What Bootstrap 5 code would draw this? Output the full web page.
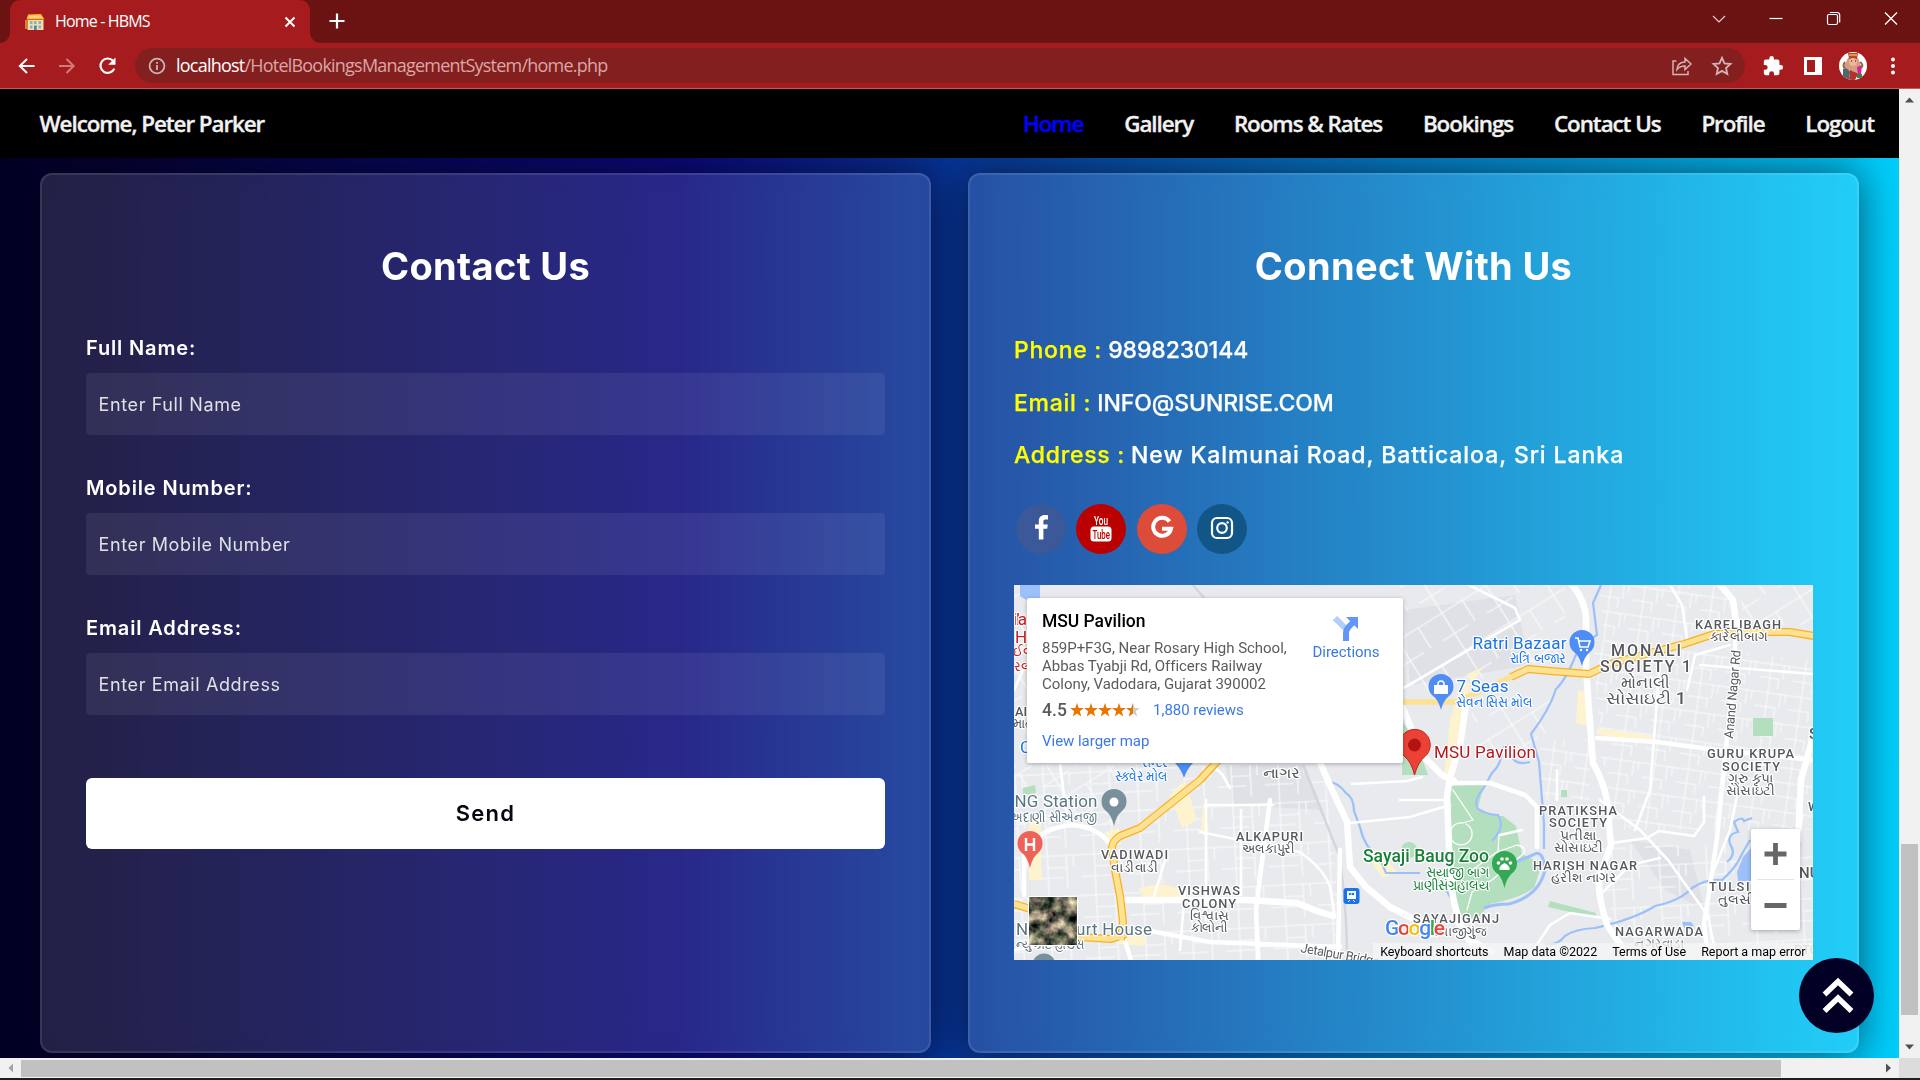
<!DOCTYPE html>
<html lang="en">
<head>
<meta charset="utf-8">
<meta name="viewport" content="width=device-width, initial-scale=1">
<title>Home - HBMS</title>
<link rel="stylesheet" href="https://cdn.jsdelivr.net/npm/bootstrap@5.3.0/dist/css/bootstrap.min.css">
<script src="https://cdn.jsdelivr.net/npm/bootstrap@5.3.0/dist/js/bootstrap.bundle.min.js"></script>
<style>
body{width:1920px;height:1080px;overflow:hidden;font-family:Inter,sans-serif;background:#1f1f1f}
svg{display:block;flex:none}
/* browser frame */
.tabstrip{height:43px;background:#6b1213;font-family:"Open Sans",sans-serif}
.apptab{width:300px;margin-left:10px;background:#a61c1e;border-radius:10px 10px 0 0;padding:0 14px 0 15px;position:relative}
.apptab::before,.apptab::after{content:"";position:absolute;bottom:0;width:10px;height:10px}
.apptab::before{left:-10px;background:radial-gradient(circle at 0 0,transparent 9.5px,#a61c1e 10px)}
.apptab::after{right:-10px;background:radial-gradient(circle at 100% 0,transparent 9.5px,#a61c1e 10px)}
.apptab-title{font-size:16px;letter-spacing:-.85px;color:#fff;margin:-2px 0 0 10px;line-height:40px}
.newtab{margin:13px 0 0 19px}
.winbtns{padding:10px 20px 0 0;gap:39.3px}
.toolbar{height:46px;background:#a61c1e;border-bottom:1px solid #c35a5b;font-family:"Open Sans",sans-serif}
.urlbar{width:1610px;height:35px;margin-left:17px;border-radius:18px;background:#841f20;padding:0 12px 0 13px}
.urltext{font-size:18px;letter-spacing:-.78px;color:#dba6a6;margin-left:10px;line-height:35px}
.urltext b{color:#fff;font-weight:400}
/* page */
.viewport-row{height:969px}
.pageview{width:1899px;background:linear-gradient(90deg,#020024 0%,#090979 36.1%,#00d4ff 102%);position:relative;overflow:hidden}
.topnav{height:69px;background:#000;padding:0 25px 0 39.5px;font:600 22.4px/70px "Open Sans",sans-serif;letter-spacing:-1.06px;color:#f2f2f2;-webkit-text-stroke:.35px}
.topnav a{color:#f2f2f2;text-decoration:none}
.topnav a.current{color:#00f}
.links{gap:40.8px}
.panels{padding:15px 40px 5px;gap:37px}
.glass{width:891px;height:880px;border:2px solid rgba(255,255,255,.1);border-radius:12px;background:rgba(255,255,255,.13);backdrop-filter:blur(10px);box-shadow:0 0 40px rgba(8,7,16,.6);padding:61px 44px 0;color:#fff}
.glass h2{font-size:38px;font-weight:700;line-height:60px;letter-spacing:.35px;margin:0;text-align:center}
.flabel{font-size:20px;font-weight:600;line-height:30px;letter-spacing:.85px;display:block;margin:0 0 10px}
.field{height:62px;border:0;border-radius:4px;background:rgba(255,255,255,.07);padding:1px 12.5px 0;font-size:18px;letter-spacing:.62px;color:#fff}
.field:focus{background:rgba(255,255,255,.07)}
.field::placeholder{color:#e1e1e5;opacity:1}
.group{margin-bottom:38px}
.sendbtn{height:71px;background:#fff;color:#080710;border-radius:6px;font-size:22px;font-weight:600;letter-spacing:1.3px;margin-top:63px}
.info{font-size:23px;font-weight:500;line-height:52.5px;white-space:nowrap;-webkit-text-stroke:.25px}
.info span{color:#ff0;letter-spacing:.72px}
.num{letter-spacing:-.1px}.addr{letter-spacing:.94px}
.socials{padding-left:2px;margin-top:22.2px;gap:10.3px}
.soc{width:50px;height:50px;border-radius:50%}
.fb{background:#3b5998}.yt{background:#b00}.gg{background:#dd4b39}.ig{background:#125688}
.mapbox{width:799px;height:375px;margin-top:31px;position:relative;overflow:hidden;font-family:Roboto,sans-serif}
.place{left:13px;top:13px;width:376px;height:165px;background:#fff;border-radius:2px;box-shadow:0 1px 4px rgba(0,0,0,.3);padding:13px 15px;color:#5b5b5b;font-size:15px;line-height:18px;letter-spacing:-.03px}
.place h3{font-size:17.5px;font-weight:500;line-height:20px;color:#000;margin:0 0 8px}
.place .maplink{color:#3b78e7;text-decoration:none}
.dirs{width:84px}
.rating{font-size:17.5px;font-weight:500;letter-spacing:.1px}
.zoomer{left:737px;top:244px;width:49px;height:101px;background:#fff;border-radius:2px;box-shadow:0 1px 4px rgba(0,0,0,.3)}
.legal{right:0;bottom:0;height:17px;font-size:12.5px;line-height:17px;color:#000}
.legal span{background:rgba(245,245,245,.75);padding:0 7.5px}
.gotop{left:1799px;top:869px;width:75px;height:75px;border-radius:50%;background:#020024}
.vbar{width:21px;background:#f1f1f1;padding:0 2px}
.vthumb{height:171px;margin-top:741px;background:#c1c1c1}
.hbar{height:20px;background:#f1f1f1}
.hthumb{width:1760px;height:17px;background:#c1c1c1}
/* map lettering */
.mt{font-family:Roboto,sans-serif;paint-order:stroke;stroke:#fff;stroke-width:2.5px;stroke-linejoin:round}
.area{fill:#55585c;font-weight:500}
</style>
</head>
<body>
<header>
  <div class="tabstrip d-flex">
    <div class="apptab d-flex align-items-center">
      <svg width="20" height="20" viewBox="0 0 20 20"><path d="M2.500 8h16v10h-16z" fill="#f6dfa2"/><path d="M3 2.500 16 2l3.500 5.500H1.500z" fill="#fcb73c"/><path d="M5 3.500h10.500l1.500 2.500H3.500z" fill="#ffd36a"/><path d="M5 9h2.500v3H5zM9 9h2.500v3H9zM13.500 9H16v3h-2.500zM5 13.500h2.500v3H5zM13.500 13.500H16v3h-2.500z" fill="#7fb2c9"/><path d="M9 13.500h2.800V18H9z" fill="#4c86c6"/><path d="M1 8v9" stroke="#fcb73c" stroke-width="1.300"/></svg>
      <span class="apptab-title">Home - HBMS</span>
      <svg class="ms-auto" width="12" height="12" viewBox="0 0 12 12"><path d="m1.500 1.500 9 9m0-9-9 9" stroke="#fff" stroke-width="2"/></svg>
    </div>
    <svg class="newtab" width="16" height="16" viewBox="0 0 16 16"><path d="M8 .5v15M.5 8h15" stroke="#fff" stroke-width="2.200"/></svg>
    <div class="winbtns d-flex ms-auto">
      <svg width="18" height="18" viewBox="0 0 18 18"><path d="m3 6 6 6 6-6" fill="none" stroke="#e5d0d0" stroke-width="1.200"/></svg>
      <svg width="18" height="18" viewBox="0 0 18 18"><path d="M2.500 8.500h13" stroke="#fff" stroke-width="1.200"/></svg>
      <svg width="18" height="18" viewBox="0 0 18 18"><rect x="2.500" y="4.500" width="10" height="10" rx="1.500" fill="none" stroke="#fff" stroke-width="1.200"/><path d="M4.800 2.500h7.400a2.500 2.500 0 0 1 2.500 2.500v7.500" fill="none" stroke="#fff" stroke-width="1.200"/></svg>
      <svg width="18" height="18" viewBox="0 0 18 18"><path d="m3 2.500 12 12m0-12-12 12" stroke="#fff" stroke-width="1.300"/></svg>
    </div>
  </div>
  <div class="toolbar d-flex align-items-center">
    <svg style="margin-left:17px" width="20" height="20" viewBox="0 0 20 20"><path d="M17.500 10H3m7-7-7.200 7 7.200 7" fill="none" stroke="#fff" stroke-width="2"/></svg>
    <svg style="margin-left:20px" width="20" height="20" viewBox="0 0 20 20"><path d="M2 10h14.500m-7-7 7.200 7-7.200 7" fill="none" stroke="#d07a7b" stroke-width="2"/></svg>
    <svg style="margin-left:21px" width="20" height="20" viewBox="0 0 20 20"><path d="M16.300 12.600A7.200 7.200 0 1 1 15 4.800" fill="none" stroke="#fff" stroke-width="2.200"/><path d="M17.500 1.500v7.300h-7.300z" fill="#fff"/></svg>
    <div class="urlbar d-flex align-items-center">
      <svg width="18" height="18" viewBox="0 0 18 18" fill="none" stroke="#c9b5b6" stroke-width="1.800"><circle cx="9" cy="9" r="7.400"/><path d="M9 8v5M9 5v1.800"/></svg>
      <span class="urltext"><b>localhost</b>/HotelBookingsManagementSystem/home.php</span>
      <svg class="ms-auto" width="22" height="22" viewBox="0 0 22 22" fill="none" stroke="#d3b3b4" stroke-width="1.500"><path d="M5.500 6H2v13.500h15V16"/><path d="M6 14.500c.5-5 3.500-7.500 8-7.500V3.500l6 5.500-6 5.500V11c-3.500 0-6 1-8 3.500z"/></svg>
      <svg style="margin-left:18px" width="22" height="22" viewBox="0 0 22 22"><path d="m11 2.800 2.500 5.600 6 .6-4.500 4 1.300 6L11 15.900 5.700 19l1.300-6-4.500-4 6-.6z" fill="none" stroke="#d3b3b4" stroke-width="1.800"/></svg>
    </div>
    <svg style="margin-left:17px" width="22" height="22" viewBox="0 0 24 24"><path fill="#fff" d="M20.500 11H19V7a2 2 0 0 0-2-2h-4V3.500a2.500 2.500 0 0 0-5 0V5H4a2 2 0 0 0-2 2v3.800h1.500a2.700 2.700 0 0 1 0 5.400H2V20a2 2 0 0 0 2 2h3.800v-1.500a2.700 2.700 0 0 1 5.400 0V22H17a2 2 0 0 0 2-2v-4h1.500a2.500 2.500 0 0 0 0-5z"/></svg>
    <svg style="margin-left:20px" width="18" height="18" viewBox="0 0 18 18"><path fill="#fff" fill-rule="evenodd" d="M0 0h18v18H0zM3 3v12h8V3z"/></svg>
    <svg style="margin-left:17px" width="28" height="28" viewBox="0 0 28 28"><clipPath id="av"><circle cx="14" cy="14" r="14"/></clipPath><g clip-path="url(#av)"><path fill="#fff" d="M0 0h28v28H0z"/><path d="M9 6h10l3 8-2 8H8L5 14z" fill="#d99a84"/><path d="M9 1h10l-1 6H10z" fill="#b8472c"/><path d="M10 3h8" stroke="#e7b449" stroke-width="1.500"/><circle cx="14" cy="10" r="4" fill="#eab79b"/><path d="M12 9h1m3 0h1" stroke="#933" stroke-width="1.500"/><path d="M4 17c3-2 5 0 7 3l-1 7H4z" fill="#4d6a68"/><path d="m18 15 5-2-1 9-3 1z" fill="#d81fa0"/><path d="M11 18c3 2 6 2 8 4l-3 6h-6z" fill="#b3302c"/><path d="M6 10c-2 2-2 5 0 6m15-6c3 2 3 4 1 6" stroke="#8c6c3f" stroke-width="2" fill="none"/><path d="M18 22h5v4h-5z" fill="#3f7a4c"/></g></svg>
    <svg style="margin-left:22.500px" width="6" height="18" viewBox="0 0 6 18" fill="#fff"><circle cx="3" cy="2.500" r="2"/><circle cx="3" cy="9" r="2"/><circle cx="3" cy="15.500" r="2"/></svg>
  </div>
</header>

<div class="viewport-row d-flex">
  <main class="pageview">
    <nav class="topnav d-flex justify-content-between">
      <span>Welcome, Peter Parker</span>
      <div class="links d-flex"><a class="current">Home</a><a>Gallery</a><a>Rooms &amp; Rates</a><a>Bookings</a><a>Contact Us</a><a>Profile</a><a>Logout</a></div>
    </nav>
    <div class="panels d-flex">
      <section class="glass">
        <h2>Contact Us</h2>
        <form style="margin-top:37px">
          <div class="group"><label class="flabel">Full Name:</label><input class="form-control field" placeholder="Enter Full Name"></div>
          <div class="group"><label class="flabel">Mobile Number:</label><input class="form-control field" placeholder="Enter Mobile Number"></div>
          <div><label class="flabel">Email Address:</label><input class="form-control field" placeholder="Enter Email Address"></div>
          <button type="button" class="btn sendbtn w-100">Send</button>
        </form>
      </section>
      <section class="glass">
        <h2>Connect With Us</h2>
        <div style="margin-top:28.300px">
          <div class="info"><span>Phone :</span> <i class="num fst-normal">9898230144</i></div>
          <div class="info"><span>Email :</span> <i class="num fst-normal">INFO@SUNRISE.COM</i></div>
          <div class="info"><span>Address :</span> <i class="addr fst-normal">New Kalmunai Road, Batticaloa, Sri Lanka</i></div>
        </div>
        <div class="socials d-flex">
          <a class="soc fb"><svg width="50" height="50" viewBox="0 0 50 50"><path fill="#fff" d="M32 11.300v4.200h-2.600c-1.700 0-2 .8-2 2v3h4.400l-.6 4.200h-3.800V35.500h-4.600V24.700H19v-4.200h3.800v-3.200c0-4 2.400-6.200 6-6.200 1.600 0 2.700.1 3.200.2z"/></svg></a>
          <a class="soc yt"><svg width="50" height="50" viewBox="0 0 50 50"><rect x="14.500" y="22.500" width="21" height="15" rx="3.500" fill="#fff"/><g font-family="Roboto,sans-serif" font-weight="500"><text x="18" y="21" font-size="13" fill="#fff" textLength="14" lengthAdjust="spacingAndGlyphs">You</text><text x="16.500" y="34.500" font-size="12" fill="#b00" textLength="17.500" lengthAdjust="spacingAndGlyphs">Tube</text></g></svg></a>
          <a class="soc gg"><svg width="50" height="50" viewBox="0 0 50 50"><path d="M32.500 17.500A9 9 0 1 0 34 24.700H25" fill="none" stroke="#fff" stroke-width="4"/></svg></a>
          <a class="soc ig"><svg width="50" height="50" viewBox="0 0 50 50" fill="none" stroke="#fff" stroke-width="2.200"><rect x="15" y="14" width="20" height="20" rx="5"/><circle cx="25" cy="24" r="4.800"/><circle cx="30.600" cy="18.400" r="1.200" fill="#fff" stroke="none"/></svg></a>
        </div>
        <div class="mapbox">
          <svg width="799" height="375" viewBox="1014 585 799 375">
            <defs>
              <pattern id="g1" width="34" height="29" patternUnits="userSpaceOnUse" patternTransform="rotate(8)"><path d="M0 5h34M0 19h20M11 0v29M24 5v14M20 19v10M29 5v8" fill="none" stroke="#fafbfc" stroke-width="1"/></pattern>
              <pattern id="g2" width="47" height="41" patternUnits="userSpaceOnUse" patternTransform="rotate(-3)"><path d="M0 8h47M0 30h29M14 0v41M33 8v33M14 20h19M40 8v12" fill="none" stroke="#fafbfc" stroke-width="1.100"/></pattern>
              <pattern id="g3" width="52" height="44" patternUnits="userSpaceOnUse" patternTransform="rotate(-32)"><path d="M0 8h52M0 32h30M14 0v44M38 8v24" fill="none" stroke="#fafbfc" stroke-width="1.200"/></pattern>
              <filter id="sat" x="0" y="0" width="1" height="1" color-interpolation-filters="sRGB"><feTurbulence type="fractalNoise" baseFrequency=".09" numOctaves="5" seed="8"/><feColorMatrix values="1.5 .3 0 0 -.47  1.3 .1 .1 0 -.33  1.1 .2 0 0 -.30  0 0 0 0 1"/></filter>
            </defs>
            <path fill="#e8eaed" d="M1014 585h799v375h-799z"/>
            <path fill="#dfe1e6" d="M1225 765h80l18 45-90-5zM1405 610l110-15 15 70-120 20zM1630 840l60 10 15 60-40-20z"/>
            <path fill="url(#g2)" d="M1014 765h310l20 195h-330zM1595 845h218v115h-190z"/>
            <path fill="url(#g1)" d="M1592 640l220 20v170h-190zM1600 585h130v50l-125 25zM1595 670h140v150h-130zM1540 740h50v60h-50z"/>
            <path fill="url(#g3)" d="M1400 585h165v70l-160 45zM1740 585h73v40h-70zM1470 700h80v40l-70 30zM1014 765h100v60h-100zM1014 585h13v200h-13z"/>
            <g fill="#fef3cf"><path d="M1170 795l15-15 12 40-15 8zM1203 800l6 30-8 2zM1105 832l14-4 2 16-10 4zM1139 888l20-4 30 6-6 10-40-2zM1029 820h12v60h-12zM1030 870h12v10h-12zM1450 720l12-40 8 4-10 50-4 40h-12zM1467 674l15-6-10 16zM1578 690l10 2 6 35-18-4zM1597 728l55 8v8l-55-10zM1368 858l15-4 14 18-14 6zM1115 930l30 6v10l-26-2z"/></g>
            <g fill="#b4dfbf"><path d="M1450 786l34-2-6 24q4 8 25 8l13 10 6 28 20 10-8 24q-14 10-44 16l-14 16-18-6-6-60z"/><path d="M1550 901l46 12v5l-48-11zM1753 718h20v18h-20zM1023 788l12-3 1 8-13 2zM1402 722l12 15 14 38h-26zM1561 790h6v7h-6zM1401 850a8 8 0 1 1 16 0 8 8 0 0 1-16 0z"/></g>
            <path fill="#9cc0f9" d="M1020 585h20v13q-10 6-20-2zM1737 872l6-15 9-10v34h-14zM1682 922h9l3 4-10 2z"/>
            <g fill="none" stroke="#9cc0f9" stroke-width="2.200"><path d="M1601 585l-8 18 4 32-18 12q-12 32-23 42-6 20-25 45l8 28 5 62v25M1530 762q-20 5-19-14-4-5-9 1 0 15-10 24l-9 16q-10 12-5 20 10 6 20 6 8 12-6 26"/><path stroke-width="3" d="M1484 908q10-4 25-4 30-8 36-34-2-22-12-15l-24 10"/><path d="M1545 944q12 2 20-8 10-7 30-8 40-9 60-22 25-5 37-18 13-9 30-8 14-12 20-26l8-14M1727 862q10-8 3-18-3-10 8-12l-4-10q8-6 10-1l8-3M1326 781q12 1 20 12 8 5 8 18l6 16q4 20 20 32l6 14h34M1440 880l12 20"/></g>
            <g fill="none" stroke="#d3d7dc" stroke-width="2.500"><path d="M1303 765l36 90q8 50 8 105M1193 585l17 20"/></g>
            <g fill="none" stroke="#fff" stroke-linecap="round" stroke-linejoin="round">
              <path stroke-width="6.500" d="M1568 580q17 18 18 38v50l5 70 2 25q16 28 16 60l2 22-11 30q-4 15 7 50l24 35M1466 705l-6 40-10 32-3 20 2 50 4 50 6 25 12 22M1319 760l14 32 14 30 3 45 16 20 24 20 30 15M1716 580l17 20 4 28M1402 706l11 27 12 25 17 17 12 6M1815 730l-14 50-3 60M1127 900h120l50 3 20 8 16 5"/>
              <path stroke-width="4.500" d="M1597 738l60 4 60 8 96 10M1736 628l-3 55-8 75-8 80-8 55-5 30 4 34M1258 960l-2-50 5-40 9-70M1024 895v-40q14-28 50-30 24 3 35 18l6 10M1150 931l60 11 130 5M1340 850l-2 110M1452 783h38l35 12 12 12v40M1123 935l8 25M1453 917l15 20 25 15"/>
              <path stroke-width="2.600" d="M1600 800l40 30 28 30 40 56 8 40M1660 660l-10 130-15 40M1612 843l35-5 12-7 35 5 10-14v-25M1600 895l30-30 30-7M1014 690l9-20M1350 823l60-6 40-12M1352 784l55-3 15-4M1205 805h68M1206 800v120M1241 810v85M1270 802l-12 80M1200 832l100 20q25 18 30 35l5 30M1230 788l-8-14-30-25M1060 765l8 60M1530 955l20-30 20-12 40 6M1400 800h48M1700 665l113 9M1687 690l8-35 35-10M1670 585l12 20 6 40M1557 770v30M1400 690l120-70-5-12-60-30M1015 950l60-10M1180 950l5-60M1165 860l-12 40M1500 835l22-5M1740 780l-10 50-20 50"/>
              <path stroke-width="1.300" d="M1453 790l20 30-10 3m0 0a11 11 0 1 0 3 1M1472 870l25-18 20-7q12 3 5 10l-30 25-20 12 -5 18M1497 870l2-35"/>
            </g>
            <g fill="none" stroke-linejoin="round"><g stroke="#f9b11e" stroke-width="8"><path d="M1223 755l-23 25-20 16-20 16-20 16-20 8q-9 6-8 14l3 20 5 26 3 26-2 18M1014 904l20 6 10 8 35 19 32 2 15-5"/><path d="M1511 677l17-8 22 2 39 3 21-10 40-11 34-9 30-10 46-2h30l24 4"/></g>
            <g stroke="#fde293" stroke-width="5.500"><path d="M1223 755l-23 25-20 16-20 16-20 16-20 8q-9 6-8 14l3 20 5 26 3 26-2 18M1014 904l20 6 10 8 35 19 32 2 15-5"/><path d="M1400 702h55l22-9 34-16 17-8 22 2 39 3 21-10 40-11 34-9 30-10 46-2h30l24 4"/></g></g>
            <!-- pins -->
            <g>
              <path d="M1582 666q-3-11-8-14a12.500 12.500 0 1 1 16 0q-6 5-8 14z" fill="#4d8df5"/><path d="M1575 638h3l2 9h8l2-6h-11" fill="none" stroke="#fff" stroke-width="1.600"/><circle cx="1581" cy="650" r="1.200" fill="#fff"/><circle cx="1587" cy="650" r="1.200" fill="#fff"/>
              <path d="M1441 710q-3-11-8-14a12.500 12.500 0 1 1 16 0q-6 5-8 14z" fill="#4d8df5"/><path d="M1434 685h14v9h-14z" fill="#fff"/><path d="M1438 687v-3a3 3 0 0 1 6 0v3" fill="none" stroke="#fff" stroke-width="1.500"/>
              <path d="M1184 778q-3-9-9-15h18q-6 6-9 15z" fill="#4d8df5"/>
              <path d="M1114 826q-3-12-8-15a12.500 12.500 0 1 1 16 0q-6 5-8 15z" fill="#78909c"/><circle cx="1114" cy="802" r="4.500" fill="#fff"/>
              <path d="M1030 868q-3-12-8-15a12.500 12.500 0 1 1 16 0q-6 5-8 15z" fill="#ef6258"/><path d="M1026 838v13m8-13v13m-8-6.500h8" stroke="#fff" stroke-width="2.400"/>
              <path d="M1504.500 888q-3-12-8-15a12.500 12.500 0 1 1 16 0q-6 5-8 15z" fill="#34a853"/><g fill="#fff"><path d="M1504.500 863q6 3 5 7h-10q-1-4 5-7z"/><circle cx="1498.500" cy="863" r="1.800"/><circle cx="1502" cy="859" r="1.800"/><circle cx="1507" cy="859" r="1.800"/><circle cx="1510.500" cy="863" r="1.800"/></g>
              <circle cx="1044" cy="965" r="11.500" fill="#78909c"/>
              <path d="M1414.500 775q-3-13-10-18.500a15.500 15.500 0 1 1 20.500 0q-7 5.500-10.500 18.500z" fill="#ea4335" stroke="#c5221f"/><circle cx="1414.500" cy="745" r="6.500" fill="#b31412"/>
              <rect x="1343.500" y="888" width="16" height="16" rx="3" fill="#1a73e8"/><path d="M1347 891h9v8h-9z" fill="#fff"/><path d="M1348.500 892.500h6v3h-6zM1351.200 892v4" fill="#1a73e8" stroke="#fff" stroke-width=".8"/><path d="M1348 902l2-2m5 2-2-2" stroke="#fff"/>
            </g>
            <g class="mt" font-size="17" fill="#1a73e8">
              <text x="1472.500" y="648.500" textLength="94">Ratri Bazaar</text><text x="1510" y="663" font-size="13.500" textLength="56" lengthAdjust="spacingAndGlyphs">રાત્રિ બજાર</text>
              <text x="1456.500" y="692" textLength="52">7 Seas</text><text x="1456" y="707" font-size="13.500" textLength="77" lengthAdjust="spacingAndGlyphs">સેવન સિસ મોલ</text>
              <text x="1142" y="767" font-size="13.500" textLength="26" lengthAdjust="spacingAndGlyphs">સેન્ટર</text><text x="1115" y="781" font-size="13.500" textLength="53" lengthAdjust="spacingAndGlyphs">સ્ક્વેર મોલ</text>
              <text x="1020" y="753">C</text>
              <text x="1434" y="758" fill="#b3171d" textLength="102">MSU Pavilion</text>
              <g fill="#c5221f"><text x="1014" y="625" textLength="13">ila</text><text x="1015" y="643">H</text><text x="1013" y="656" font-size="13">ઈલ</text><text x="1014" y="671" font-size="13">રલ</text></g>
              <g fill="#5b7583"><text x="1014.500" y="807" textLength="83">NG Station</text><text x="1010" y="822" font-size="13.500" textLength="87" lengthAdjust="spacingAndGlyphs">અદાણી સીએનજી</text><text x="1016" y="934.500" textLength="136">New Court House</text><text x="1016" y="949" font-size="13.500" textLength="68" lengthAdjust="spacingAndGlyphs">ન્યુ કોર્ટ હાઉસ</text></g>
              <g fill="#188038" font-weight="500"><text x="1363" y="862" font-size="17.500" textLength="126">Sayaji Baug Zoo</text><text x="1426" y="877" font-size="14" textLength="63" font-weight="400" lengthAdjust="spacingAndGlyphs">સયાજી બાગ</text><text x="1413" y="890" font-size="14" textLength="76" font-weight="400" lengthAdjust="spacingAndGlyphs">પ્રાણીસંગ્રહાલય</text></g>
            </g>
            <g class="mt area" font-size="12.800">
              <text x="1695" y="629" textLength="86">KARELIBAGH</text><text x="1710" y="641" textLength="57" lengthAdjust="spacingAndGlyphs">કારેલીબાગ</text>
              <g font-size="16"><text x="1611" y="655.500" textLength="70">MONALI</text><text x="1600" y="672" textLength="91">SOCIETY 1</text><text x="1621" y="688" textLength="49" lengthAdjust="spacingAndGlyphs">મોનાલી</text><text x="1606" y="704" textLength="80" lengthAdjust="spacingAndGlyphs">સોસાઇટી 1</text></g>
              <text x="1707" y="758" textLength="87">GURU KRUPA</text><text x="1722" y="770.500" textLength="58">SOCIETY</text><text x="1728" y="783" textLength="45" lengthAdjust="spacingAndGlyphs">ગુરુ કૃપા</text><text x="1726" y="795" textLength="49" lengthAdjust="spacingAndGlyphs">સોસાઇટી</text>
              <text x="1539" y="814.500" textLength="78">PRATIKSHA</text><text x="1549" y="827" textLength="58">SOCIETY</text><text x="1560" y="840" textLength="36" lengthAdjust="spacingAndGlyphs">પ્રતીક્ષા</text><text x="1554" y="852" textLength="49" lengthAdjust="spacingAndGlyphs">સોસાઇટી</text>
              <text x="1533" y="870" textLength="104">HARISH NAGAR</text><text x="1551" y="882" textLength="65" lengthAdjust="spacingAndGlyphs">હરીશ નાગર</text>
              <text x="1709" y="891" textLength="78">TULSIWADI</text><text x="1718" y="903.500" textLength="62" lengthAdjust="spacingAndGlyphs">તુલસીવાડી</text>
              <text x="1615" y="935.500" textLength="88">NAGARWADA</text><text x="1634" y="948" textLength="50" opacity=".7" lengthAdjust="spacingAndGlyphs">નગરવાડા</text>
              <text x="1413" y="923" textLength="86">SAYAJIGANJ</text><text x="1428" y="936" textLength="58" lengthAdjust="spacingAndGlyphs">સયાજીગુંજ</text>
              <text x="1236" y="841" textLength="67">ALKAPURI</text><text x="1242" y="853" textLength="53" lengthAdjust="spacingAndGlyphs">અલકાપુરી</text>
              <text x="1101" y="859" textLength="67">VADIWADI</text><text x="1111" y="871.500" textLength="47" lengthAdjust="spacingAndGlyphs">વાડીવાડી</text>
              <text x="1178" y="895" textLength="62">VISHWAS</text><text x="1182" y="907.500" textLength="54">COLONY</text><text x="1190" y="920" textLength="39" lengthAdjust="spacingAndGlyphs">વિશ્વાસ</text><text x="1191" y="932" textLength="37" lengthAdjust="spacingAndGlyphs">કોલોની</text>
              <text x="1263" y="777.500" font-size="14" textLength="37" lengthAdjust="spacingAndGlyphs">નાગર</text>
              <text x="1015" y="716">AI</text><text x="1013" y="728">માત</text><text x="1809" y="739" font-size="15">S</text><text x="1808" y="811">W</text><text x="1799" y="878" font-size="15">NU</text><text x="1794" y="954" opacity=".5">PTC</text>
              <g font-weight="400" font-size="13"><text transform="translate(1733 739) rotate(-85)" textLength="89">Anand Nagar Rd</text><text transform="translate(1300 952) rotate(10)" textLength="80">Jetalpur Bridge</text></g>
            </g>
            <g class="mt" font-size="21" font-weight="500" stroke-width="2"><text x="1385" y="934.500" textLength="60"><tspan fill="#4285f4">G</tspan><tspan fill="#ea4335">o</tspan><tspan fill="#fbbc04">o</tspan><tspan fill="#4285f4">g</tspan><tspan fill="#34a853">l</tspan><tspan fill="#ea4335">e</tspan></text></g>
            <rect x="1028" y="896" width="50" height="50" rx="3" fill="#fff"/><rect x="1029.500" y="897.500" width="47" height="47" rx="2" filter="url(#sat)"/>
          </svg>
          <div class="place position-absolute">
            <div class="d-flex justify-content-between">
              <div class="text-nowrap"><h3>MSU Pavilion</h3>859P+F3G, Near Rosary High School,<br>Abbas Tyabji Rd, Officers Railway<br>Colony, Vadodara, Gujarat 390002</div>
              <a class="dirs maplink text-center"><svg class="mx-auto mt-1" width="26" height="28" viewBox="0 0 26 28"><path d="M2 3l11.500 11.500" stroke="#b3cdfd" stroke-width="6"/><path d="M13 26V18.500q0-4 3-7l6-6" fill="none" stroke="#6296f8" stroke-width="6"/><path d="M13 2h12v12z" fill="#6296f8"/></svg><div>Directions</div></a>
            </div>
            <div class="d-flex align-items-center" style="margin-top:8px">
              <span class="rating">4.5</span>
              <svg style="margin-left:3px" width="70" height="14" viewBox="0 0 70 14"><defs><path id="st" d="M7 0l1.700 5 5.200.1-4.100 3.200 1.400 5.300L7 10.600l-4.200 3 1.400-5.300L.1 5.100 5.300 5z"/></defs><g fill="#e77600"><use href="#st"/><use href="#st" x="14"/><use href="#st" x="28"/><use href="#st" x="42"/></g><use href="#st" x="56" fill="#ccc"/><path d="M63 0v10.600l-4.200 3 1.400-5.300-4.100-3.200 5.200-.1z" fill="#e77600"/></svg>
              <a class="maplink" style="margin-left:13px">1,880 reviews</a>
            </div>
            <a class="maplink d-block" style="margin-top:13px">View larger map</a>
          </div>
          <div class="zoomer position-absolute"><svg width="49" height="101" viewBox="0 0 49 101"><path d="M13.500 25h22M24.500 14v22M13.500 76.500h22" stroke="#666" stroke-width="4.800"/><path d="M6 50.500h37" stroke="#e6e6e6"/></svg></div>
          <div class="legal position-absolute d-flex"><span>Keyboard shortcuts</span><span>Map data ©2022</span><span>Terms of Use</span><span>Report a map error</span></div>
        </div>
      </section>
    </div>
    <a class="gotop position-absolute"><svg width="75" height="75" viewBox="0 0 75 75"><path d="M25.500 36.500 39 23.500l13.500 13M25.500 53 39 40l13.500 13" fill="none" stroke="#fff" stroke-width="5.500"/></svg></a>
  </main>
  <div class="vbar d-flex flex-column">
    <svg class="mt-2" width="17" height="6" viewBox="0 0 17 6"><path d="M4 5.500 8.500.5l4.500 5z" fill="#505050"/></svg>
    <div class="vthumb"></div>
    <svg style="margin-top:29px" width="17" height="6" viewBox="0 0 17 6"><path d="M4 .5l4.500 5 4.500-5z" fill="#505050"/></svg>
  </div>
</div>
<div class="hbar d-flex align-items-center">
  <svg width="21" height="20" viewBox="0 0 21 20"><path d="M13 5.500v9L8.500 10z" fill="#a3a3a3"/></svg>
  <div class="hthumb"></div>
  <svg class="ms-auto" width="21" height="20" viewBox="0 0 21 20"><path d="M8 5.500v9l5-4.500z" fill="#505050"/></svg>
  <svg width="21" height="20"><path d="M0 0h21v20H0z" fill="#dcdcdc"/></svg>
</div>
</body>
</html>
